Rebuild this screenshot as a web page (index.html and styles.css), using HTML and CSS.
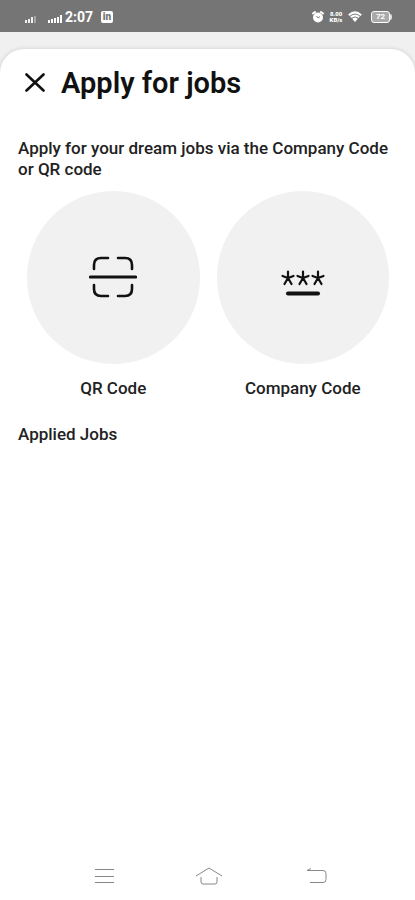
FILE: index.html
```html
<!DOCTYPE html>
<html lang="en">
<head>
  <meta charset="UTF-8">
  <meta name="viewport" content="width=device-width, initial-scale=1.0">
  <title>Apply for jobs</title>
  <link rel="stylesheet" href="styles.css">
</head>
<body>
  <!-- Status bar -->
  <div class="status-bar">
    <div class="status-left">
      <svg class="signal weak" width="14" height="8" viewBox="0 0 14 8" fill="currentColor">
        <path d="M1 5h2v3H1zM4 4h2v4H4zM7 2h2v6H7z"/>
        <path d="M10 1h2v7h-2z" opacity=".4"/>
      </svg>
      <svg class="signal" width="14" height="8" viewBox="0 0 14 8" fill="currentColor">
        <path d="M0 5h2v3H0zM3 4h2v4H3zM6 3h2v5H6zM9 2h2v6H9zM12 0h2v8h-2z"/>
      </svg>
      <span class="time">2:07</span>
      <span class="app-badge">in</span>
    </div>
    <div class="status-right">
      <svg width="12" height="12" viewBox="0 0 12 12">
        <circle cx="6" cy="6.5" r="5" fill="#fff"/>
        <path d="M1 2.5L3 1M11 2.5L9 1" stroke="#fff" stroke-width="2" stroke-linecap="round"/>
        <path d="M4.5 5l1.700 2L8 5.500" fill="none" stroke="#757575"/>
      </svg>
      <span class="speed"><span>8.00</span><span>KB/s</span></span>
      <svg class="wifi" width="14" height="12" viewBox="0 0 14 12" fill="none" stroke="#fff">
        <path d="M.8 4.200Q7-1.400 13.200 4.200" stroke-width="2"/>
        <path d="M2.800 6.300Q7 2.600 11.200 6.300" stroke-width="2"/>
        <path d="M4.200 7.700Q7 5.400 9.800 7.700L7 11z" fill="#fff" stroke="none"/>
      </svg>
      <span class="battery"><span class="battery-level">72</span></span>
    </div>
  </div>

  <!-- Sheet -->
  <main class="sheet">
    <header class="sheet-header">
      <button class="close" type="button" aria-label="Close">
        <svg width="20" height="20" viewBox="0 0 20 20" fill="none" stroke="#111" stroke-width="2.600" stroke-linecap="round">
          <path d="M1.500 1.500l17 16M18.500 1.500l-17 16"/>
        </svg>
      </button>
      <h1>Apply for jobs</h1>
    </header>

    <p class="intro">Apply for your dream jobs via the Company Code or QR code</p>

    <div class="options">
      <button class="option" type="button">
        <span class="circle">
          <svg width="48" height="42" viewBox="0 0 48 42" fill="none" stroke="#111" stroke-width="2.600" stroke-linecap="round">
            <path d="M5 13V9q0-7 7-7h7M29 2h7q7 0 7 7v4M5 29v4q0 7 7 7h7M29 40h7q7 0 7-7v-4"/>
            <path d="M1.500 21h45" stroke-width="3.200"/>
          </svg>
        </span>
        <span class="label">QR Code</span>
      </button>
      <button class="option" type="button">
        <span class="circle">
          <svg width="44" height="42" viewBox="0 0 44 42" fill="none" stroke="#111" stroke-linecap="round">
            <g stroke-width="2.200">
              <path id="star" d="M7 22V15.500M7 22L1.500 20M7 22L12.500 20M7 22L3.500 28M7 22L10.500 28"/>
              <use href="#star" x="15"/>
              <use href="#star" x="30"/>
            </g>
            <path d="M7 37.500h30" stroke-width="4"/>
          </svg>
        </span>
        <span class="label">Company Code</span>
      </button>
    </div>

    <h2>Applied Jobs</h2>
  </main>

  <!-- System navigation -->
  <nav class="nav-bar">
    <button type="button" aria-label="Recent apps">
      <svg width="28" height="20" viewBox="0 0 28 20">
        <path d="M4 3.500h19M4 10.500h19M4 16.500h19"/>
      </svg>
    </button>
    <button type="button" aria-label="Home">
      <svg width="28" height="20" viewBox="0 0 28 20">
        <path d="M1 10L14 2l13 8M6 11v5q0 2 2 2h12q2 0 2-2v-5"/>
      </svg>
    </button>
    <button type="button" aria-label="Back">
      <svg width="28" height="20" viewBox="0 0 28 20">
        <path d="M12 2.500L8 4.500h16q3 0 3 3v6q0 3-3 3H11"/>
      </svg>
    </button>
  </nav>
</body>
</html>
```
FILE: styles.css
```css
* {
  box-sizing: border-box;
}

body {
  margin: 0;
  min-height: 100vh;
  display: flex;
  flex-direction: column;
  background: #f0f0f0;
  color: #222;
  font-family: Roboto, sans-serif;
}

button {
  padding: 0;
  border: none;
  background: none;
  color: inherit;
  font: inherit;
  cursor: pointer;
}

svg {
  display: block;
}

/* Status bar */
.status-bar {
  display: flex;
  align-items: center;
  justify-content: space-between;
  height: 32px;
  padding: 2px 23px 0 24px;
  background: #757575;
  color: #fff;
}

.status-left,
.status-right {
  display: flex;
  align-items: center;
}

.signal {
  margin: 4px 3px 0 0;
}

.signal.weak {
  margin-right: 10px;
  opacity: 0.9;
}

.time {
  font-size: 14px;
  font-weight: 700;
}

.app-badge {
  width: 12px;
  height: 12px;
  margin-left: 8px;
  border-radius: 2px;
  background: #fff;
  color: #757575;
  font-size: 10px;
  font-weight: 900;
  line-height: 12px;
  text-align: center;
}

.status-right {
  gap: 5px;
}

.speed {
  display: flex;
  flex-direction: column;
  width: 14px;
  font-size: 6px;
  font-weight: 900;
  line-height: 6px;
  text-align: center;
}

.battery {
  display: flex;
  align-items: center;
  margin-left: 4px;
}

.battery::after {
  content: "";
  width: 2px;
  height: 6px;
  border-radius: 0 2px 2px 0;
  background: #ddd;
}

.battery-level {
  width: 19px;
  height: 12px;
  border: 1px solid #fff;
  border-radius: 3px;
  background: #aaa;
  font-size: 8px;
  font-weight: 700;
  line-height: 10px;
  text-align: center;
}

/* Sheet */
.sheet {
  flex: 1;
  margin-top: 17px;
  padding: 16px 18px;
  border-radius: 24px 24px 0 0;
  background: #fff;
  box-shadow: 0 0 4px rgba(0, 0, 0, 0.16);
}

.sheet-header {
  display: flex;
  align-items: center;
  gap: 16px;
  padding-left: 7px;
}

h1 {
  margin: 0;
  color: #111;
  font-size: 29px;
  font-weight: 600;
  line-height: 36px;
}

.intro {
  margin: 37px 0 11px;
  font-size: 17px;
  font-weight: 500;
  line-height: 21px;
}

.options {
  display: grid;
  grid-template-columns: 1fr 1fr;
  gap: 17px;
  padding: 0 8px 0 9px;
}

.circle {
  display: flex;
  align-items: center;
  justify-content: center;
  aspect-ratio: 1;
  border-radius: 50%;
  background: #f1f1f1;
}

.label {
  display: block;
  margin-top: 14px;
  font-size: 17px;
  font-weight: 500;
  line-height: 21px;
}

h2 {
  margin: 25px 0 0;
  font-size: 17px;
  font-weight: 500;
  line-height: 21px;
}

/* System navigation */
.nav-bar {
  display: flex;
  justify-content: space-between;
  padding: 14px 88px 14px 91px;
  background: #fff;
}

.nav-bar svg {
  fill: none;
  stroke: #888;
  stroke-width: 1;
}
```
